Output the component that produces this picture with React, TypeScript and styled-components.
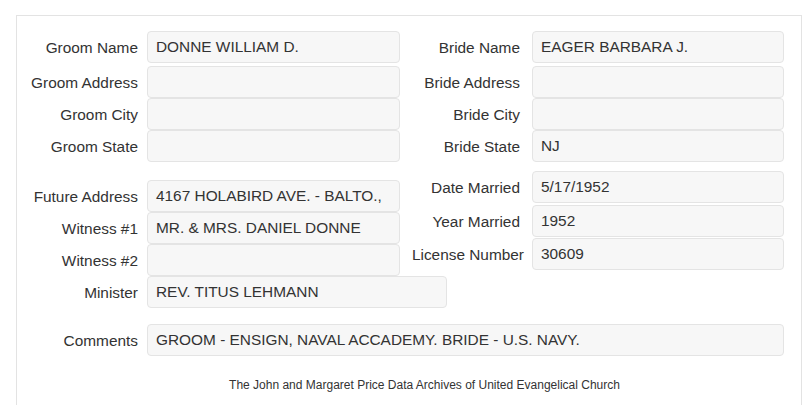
import React from 'react';
import styled, { createGlobalStyle } from 'styled-components';

const GlobalStyle = createGlobalStyle`
  body {
    margin: 0;
    background: #fff;
    font-family: "Liberation Sans", Arial, sans-serif;
    color: #333;
  }
`;

type Field = {
  label: string;
  value?: string;
  mt?: number;
  width?: number;
  nudge?: number;
};

const groomFields: Field[] = [
  { label: 'Groom Name', value: 'DONNE WILLIAM D.' },
  { label: 'Groom Address', mt: 3 },
  { label: 'Groom City' },
  { label: 'Groom State' },
];

const brideFields: Field[] = [
  { label: 'Bride Name', value: 'EAGER BARBARA J.' },
  { label: 'Bride Address', mt: 3 },
  { label: 'Bride City' },
  { label: 'Bride State', value: 'NJ' },
];

const otherLeft: Field[] = [
  { label: 'Future Address', value: '4167 HOLABIRD AVE. - BALTO.,', mt: 18 },
  { label: 'Witness #1', value: 'MR. & MRS. DANIEL DONNE' },
  { label: 'Witness #2' },
  { label: 'Minister', value: 'REV. TITUS LEHMANN', width: 300 },
];

const otherRight: Field[] = [
  { label: 'Date Married', value: '5/17/1952', mt: 9 },
  { label: 'Year Married', value: '1952', mt: 2 },
  { label: 'License Number', value: '30609', mt: 1, nudge: 4 },
];

const App = () => {
  return (
    <>
      <GlobalStyle />
      <Panel>
        <Section>
          <Column fields={groomFields} labelWidth={121} gap={9} inputWidth={253} />
          <Column fields={brideFields} labelWidth={120} gap={12} inputWidth={252} />
        </Section>
        <Section>
          <Column fields={otherLeft} labelWidth={121} gap={9} inputWidth={253} />
          <Column fields={otherRight} labelWidth={120} gap={12} inputWidth={252} />
        </Section>
        <Column
          fields={[
            {
              label: 'Comments',
              value: 'GROOM - ENSIGN, NAVAL ACCADEMY. BRIDE - U.S. NAVY.',
              mt: 16,
            },
          ]}
          labelWidth={121}
          gap={9}
          inputWidth={637}
        />
        <Footer>The John and Margaret Price Data Archives of United Evangelical Church</Footer>
      </Panel>
    </>
  );
};

type ColumnProps = {
  fields: Field[];
  labelWidth: number;
  gap: number;
  inputWidth: number;
};

const Column = ({ fields, labelWidth, gap, inputWidth }: ColumnProps) => (
  <Stack $width={labelWidth + gap + inputWidth}>
    {fields.map((f) => (
      <Row
        key={f.label}
        $mt={f.mt || 0}
        $labelWidth={labelWidth}
        $gap={gap}
        $inputWidth={f.width || inputWidth}
      >
        <Label $nudge={f.nudge || 0}>{f.label}</Label>
        <Input>{f.value}</Input>
      </Row>
    ))}
  </Stack>
);

export default App;

const Panel = styled.div`
  margin: 15px 0 0 16px;
  width: 786px;
  min-height: 420px;
  box-sizing: border-box;
  border: 1px solid #e3e3e3;
  padding-top: 15px;
`;

const Section = styled.div`
  display: flex;
  align-items: flex-start;
`;

const Stack = styled.div<{ $width: number }>`
  display: flex;
  flex-direction: column;
  flex: none;
  width: ${(p) => p.$width}px;
`;

const Row = styled.div<{ $mt: number; $labelWidth: number; $gap: number; $inputWidth: number }>`
  display: grid;
  grid-template-columns: ${(p) => p.$labelWidth}px ${(p) => p.$inputWidth}px;
  column-gap: ${(p) => p.$gap}px;
  margin-top: ${(p) => p.$mt}px;
  height: 32px;
`;

const Label = styled.div<{ $nudge: number }>`
  display: flex;
  align-items: center;
  justify-content: flex-end;
  padding-top: 2px;
  margin-right: ${(p) => -p.$nudge}px;
  font-size: 15.4px;
  white-space: nowrap;
  color: #333;
`;

const Input = styled.div`
  display: flex;
  align-items: center;
  box-sizing: border-box;
  height: 32px;
  padding: 0 8px;
  background: #f7f7f7;
  border: 1px solid #e4e4e4;
  border-radius: 4px;
  font-size: 15.4px;
  color: #333;
  white-space: nowrap;
  overflow: hidden;
`;

const Footer = styled.div`
  margin: 21px 0 0 31px;
  text-align: center;
  font-size: 12px;
  line-height: 17px;
  color: #333;
`;
